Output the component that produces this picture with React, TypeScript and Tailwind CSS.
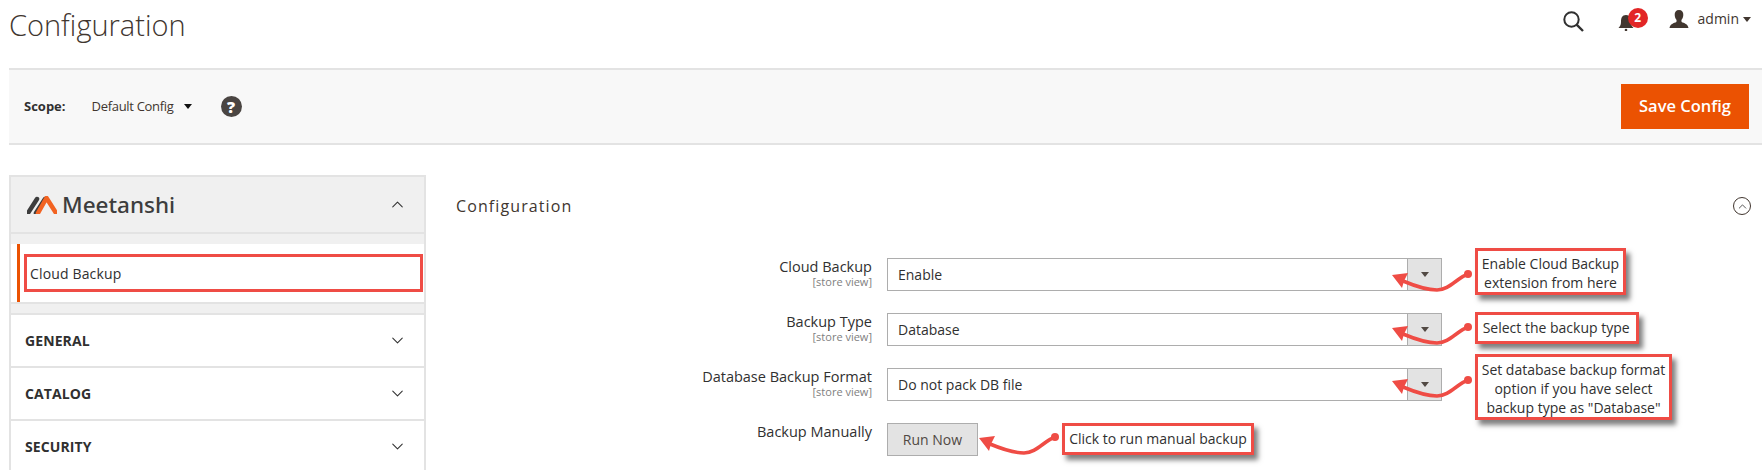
import { ChevronDown, ChevronUp } from 'lucide-react';

const fields = [
  { label: 'Cloud Backup', value: 'Enable' },
  { label: 'Backup Type', value: 'Database' },
  { label: 'Database Backup Format', value: 'Do not pack DB file' },
];

function CurvedArrow({ className }: { className: string }) {
  // hand-drawn annotation arrow, dot on the right, head on the left
  return (
    <svg className={className} width="84" height="30" viewBox="0 0 84 30" fill="none">
      <path d="M77 6 C66 10 58 22 46 22 C36 22 24 18 12 13" stroke="#ef4c45" strokeWidth="3.6" strokeLinecap="round" />
      <path d="M1 7 L17 5 L13 13 L11 20 Z" fill="#ef4c45" />
      <circle cx="77" cy="6" r="4" fill="#ef4c45" />
    </svg>
  );
}

function Callout({ className, children }: { className: string; children: React.ReactNode }) {
  return (
    <div className={`absolute border-[3px] border-[#ef4c45] bg-white text-center text-[14px] leading-[19px] text-[#303030] shadow-[4px_5px_5px_rgba(0,0,0,0.5)] font-['Open_Sans',sans-serif] ${className}`}>
      {children}
    </div>
  );
}

function NavSection({ title, last }: { title: string; last?: boolean }) {
  return (
    <div className={`flex items-center justify-between pl-[14px] pr-[17px] ${last ? 'h-[50px]' : 'h-[53px] border-b-2 border-[#e3e3e3]'}`}>
      <span className="text-[14px] font-bold tracking-[0.1px] text-[#303030]">{title}</span>
      <ChevronDown size={19} strokeWidth={1.3} className="text-[#303030]" />
    </div>
  );
}

export default function App() {
  return (
    <div className="relative h-[470px] w-[1762px] overflow-hidden bg-white font-['Open_Sans',sans-serif] text-[#303030]">
      <header className="flex h-[68px] items-start justify-between pl-[9px] pr-[11px]">
        <h1 className="mt-[5px] text-[29px] leading-[40px] font-light text-[#41362f]">Configuration</h1>
        <div className="flex items-start">
          <svg className="mt-[11px]" width="21" height="21" viewBox="0 0 21 21" fill="none">
            <circle cx="8.5" cy="8.5" r="7.2" stroke="#303030" strokeWidth="2" />
            <path d="M13.6 13.6 L20 20" stroke="#303030" strokeWidth="2.4" />
          </svg>
          <div className="relative ml-[34px] mt-[14px] h-[17px] w-[30px]">
            <svg className="absolute left-0 top-0" width="16" height="17" viewBox="0 0 16 17">
              <path d="M8 1 C4 1 3 4 3 8 C3 11 2 12 0.5 14 L15.5 14 C14 12 13 11 13 8 C13 4 12 1 8 1 Z" fill="#41362f" />
              <circle cx="8" cy="16" r="1.3" fill="#41362f" />
            </svg>
            <span className="absolute left-[10px] top-[-6px] flex h-[20px] w-[20px] items-center justify-center rounded-full bg-[#e22626] text-[12px] font-bold text-white">2</span>
          </div>
          <svg className="ml-[21px] mt-[10px]" width="20" height="18" viewBox="0 0 20 18">
            <path d="M10 0 C13 0 14.5 2 14.3 5 C14.2 7 13.4 9 12.4 10 L12.6 12 C15 13 19 14 19.5 18 L0.5 18 C1 14 5 13 7.4 12 L7.6 10 C6.6 9 5.8 7 5.7 5 C5.5 2 7 0 10 0 Z" fill="#41362f" />
          </svg>
          <span className="ml-[9px] mt-[9px] text-[14px] leading-[20px] text-[#41362f]">admin</span>
          <span className="ml-[4px] mt-[17px] h-0 w-0 border-x-[4px] border-t-[5px] border-x-transparent border-t-[#41362f]" />
        </div>
      </header>

      <div className="ml-[9px] flex h-[77px] items-center justify-between border-y-2 border-[#e3e3e3] bg-[#f8f8f8] pr-[13px]">
        <div className="flex items-center">
          <span className="ml-[15px] text-[13px] font-bold text-[#303030]">Scope:</span>
          <span className="ml-[26px] text-[13px] tracking-[-0.3px] text-[#41362f]">Default Config</span>
          <span className="ml-[10px] h-0 w-0 border-x-[4px] border-t-[5px] border-x-transparent border-t-[#111]" />
          <span className="ml-[29px] flex h-[21px] w-[21px] items-center justify-center rounded-full bg-[#4a4542] text-[16px] font-extrabold text-white">?</span>
        </div>
        <button className="h-[45px] w-[128px] bg-[#eb5202] text-[16.5px] font-semibold text-white">Save Config</button>
      </div>

      <div className="mt-[30px] flex pl-[9px]">
        <aside className="w-[417px] border-x-2 border-[#e3e3e3]">
          <div className="flex h-[59px] items-center justify-between border-y-2 border-[#e3e3e3] bg-[#f0f0f0] pl-[16px] pr-[17px]">
            <div className="flex items-center">
              <svg width="30" height="18" viewBox="0 0 30 18">
                <path d="M1 17 L10 3" stroke="#3d3d3d" strokeWidth="4.5" strokeLinecap="round" />
                <path d="M9 17 L18 3" stroke="#3d3d3d" strokeWidth="4.5" strokeLinecap="round" />
                <path d="M11 17 L19.5 2 L29 17" fill="none" stroke="#f26322" strokeWidth="4.5" strokeLinejoin="round" strokeLinecap="round" />
              </svg>
              <span className="ml-[5px] font-['Noto_Sans',sans-serif] text-[22.5px] leading-[30px] font-medium text-[#3d3d3d]">Meetanshi</span>
            </div>
            <ChevronUp size={19} strokeWidth={1.3} className="text-[#303030]" />
          </div>
          <div className="h-[10px] bg-[#f0f0f0]" />
          <div className="-mx-[2px] ml-[6px] mr-[0px] h-[58px] border-l-[3px] border-[#eb5202] bg-white py-[10px] pl-[4px] pr-[1px]">
            <div className="flex h-[38px] items-center border-[3px] border-[#ef4c45] pl-[3px] text-[14px] tracking-[0.15px] text-[#303030]">Cloud Backup</div>
          </div>
          <div className="h-[13px] border-y-2 border-[#e3e3e3] bg-[#f0f0f0]" />
          <NavSection title="GENERAL" />
          <NavSection title="CATALOG" />
          <NavSection title="SECURITY" last />
        </aside>

        <main className="ml-[30px] flex-1 pr-[11px]">
          <div className="flex h-[62px] items-center justify-between">
            <h2 className="text-[16px] font-medium tracking-[1.1px] text-[#41362f]">Configuration</h2>
            <span className="flex h-[18px] w-[18px] items-center justify-center rounded-full border border-[#41362f]">
              <ChevronUp size={13} strokeWidth={1.5} />
            </span>
          </div>
          <div className="mt-[21px] flex flex-col gap-[22px] pl-[15px]">
            {fields.map((f) => (
              <div key={f.label} className="flex">
                <div className="w-[401px] text-right">
                  <div className="text-[14.5px] leading-[17px] font-medium text-[#303030]">{f.label}</div>
                  <div className="text-[11px] leading-[14px] text-[#808080]">[store view]</div>
                </div>
                <div className="ml-[15px] flex h-[33px] w-[555px] items-center border border-[#adadad] bg-white">
                  <span className="flex-1 pl-[10px] text-[14px] text-[#303030]">{f.value}</span>
                  <span className="flex h-full w-[34px] items-center justify-center border-l border-[#adadad] bg-[#e3e3e3]">
                    <span className="h-0 w-0 border-x-[4px] border-t-[5px] border-x-transparent border-t-[#514943]" />
                  </span>
                </div>
              </div>
            ))}
            <div className="flex">
              <div className="w-[401px] text-right text-[14.5px] leading-[17px] font-medium text-[#303030]">Backup Manually</div>
              <button className="ml-[15px] h-[33px] w-[91px] border border-[#adadad] bg-[#e3e3e3] text-[14px] font-medium text-[#514943]">Run Now</button>
            </div>
          </div>
        </main>
      </div>

      <CurvedArrow className="absolute left-[1391px] top-[268px]" />
      <CurvedArrow className="absolute left-[1391px] top-[321px]" />
      <CurvedArrow className="absolute left-[1391px] top-[374px]" />
      <CurvedArrow className="absolute left-[978px] top-[431px]" />

      <Callout className="left-[1475px] top-[248px] h-[47px] w-[151px] pt-[3px]">Enable Cloud Backup<br />extension from here</Callout>
      <Callout className="left-[1475px] top-[312px] h-[32px] w-[164px] pt-[3px] pl-[1px] text-left">&nbsp;Select the backup type</Callout>
      <Callout className="left-[1475px] top-[354px] h-[66px] w-[197px] pt-[3px]">Set database backup format<br />option if you have select<br />backup type as "Database"</Callout>
      <Callout className="left-[1062px] top-[423px] h-[32px] w-[192px] pt-[3px] whitespace-nowrap">Click to run manual backup</Callout>
    </div>
  );
}
